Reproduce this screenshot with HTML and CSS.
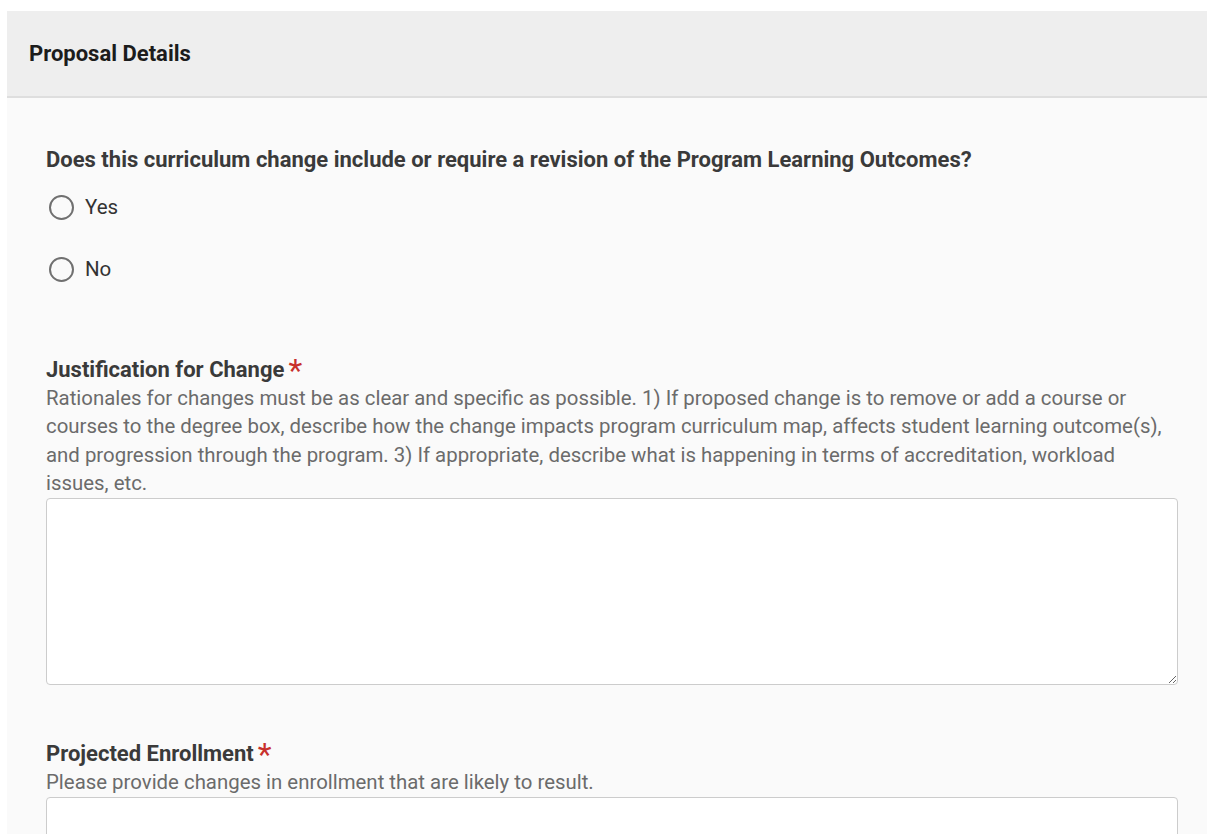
FILE: index.html
```html
<!DOCTYPE html>
<html lang="en">
<head>
    <meta charset="UTF-8">
    <meta name="viewport" content="width=device-width, initial-scale=1.0">
    <title>Proposal Details</title>
    <link rel="stylesheet" href="styles.css">
</head>
<body>

    <!-- proposal panel -->
    <div class="panel">
        <div class="panel-header">Proposal Details</div>

        <div class="panel-body">
            <div class="field">
                <div class="question">Does this curriculum change include or require a revision of the Program Learning Outcomes?</div>
                <label class="radio-row">
                    <input type="radio" name="plo" value="yes">
                    <span>Yes</span>
                </label>
                <label class="radio-row">
                    <input type="radio" name="plo" value="no">
                    <span>No</span>
                </label>
            </div>

            <div class="field">
                <div class="field-label">Justification for Change<span class="required">*</span></div>
                <div class="field-help">Rationales for changes must be as clear and specific as possible. 1) If proposed change is to remove or add a course or courses to the degree box, describe how the change impacts program curriculum map, affects student learning outcome(s), and progression through the program. 3) If appropriate, describe what is happening in terms of accreditation, workload issues, etc.</div>
                <textarea class="field-text" name="justification"></textarea>
            </div>

            <div class="field">
                <div class="field-label">Projected Enrollment<span class="required">*</span></div>
                <div class="field-help">Please provide changes in enrollment that are likely to result.</div>
                <textarea class="field-text" name="enrollment"></textarea>
            </div>
        </div>
    </div>

</body>
</html>
```

FILE: styles.css
```css
/* general page */
body {
    font-family: Roboto, 'Liberation Sans', sans-serif;
    margin: 0;
    padding: 0;
    background: #ffffff;
    overflow: hidden;
}

/* panel */
.panel {
    margin: 11px 13px 0 7px;
    background: #fafafa;
}

.panel-header {
    background: #eeeeee;
    border-bottom: 2px solid #dedede;
    height: 85px;
    padding-left: 22px;
    display: flex;
    align-items: center;
    font-size: 22px;
    font-weight: bold;
    color: #1c1c1c;
}

.panel-body {
    padding: 48px 29px 0 39px;
}

/* question with radios */
.question {
    font-size: 22px;
    font-weight: bold;
    line-height: 28px;
    color: #3a3a3a;
}

.radio-row {
    display: flex;
    align-items: center;
    height: 40px;
    margin-top: 13px;
    font-size: 20.5px;
    color: #333;
    cursor: pointer;
}

.radio-row + .radio-row {
    margin-top: 22px;
}

.radio-row input {
    appearance: none;
    width: 25px;
    height: 25px;
    margin: 0 11px 0 3px;
    border: 2px solid #707070;
    border-radius: 50%;
    background: transparent;
    box-sizing: border-box;
}

/* text fields */
.field + .field {
    margin-top: 67px;
}

.field:last-child {
    margin-top: 55px;
}

.field-label {
    font-size: 22px;
    font-weight: bold;
    line-height: 28px;
    color: #3a3a3a;
}

.required {
    color: #c8302c;
    font-size: 32px;
    font-weight: normal;
    line-height: 0;
    margin-left: 4px;
    position: relative;
    top: 4px;
}

.field-help {
    font-size: 20.4px;
    line-height: 28.3px;
    color: #6b6b6b;
}

.field-text {
    display: block;
    width: 100%;
    height: 187px;
    margin-top: 1px;
    box-sizing: border-box;
    border: 1px solid #cccccc;
    border-radius: 4px;
    background: #ffffff;
    resize: vertical;
    font-family: inherit;
    font-size: 18px;
}
```
